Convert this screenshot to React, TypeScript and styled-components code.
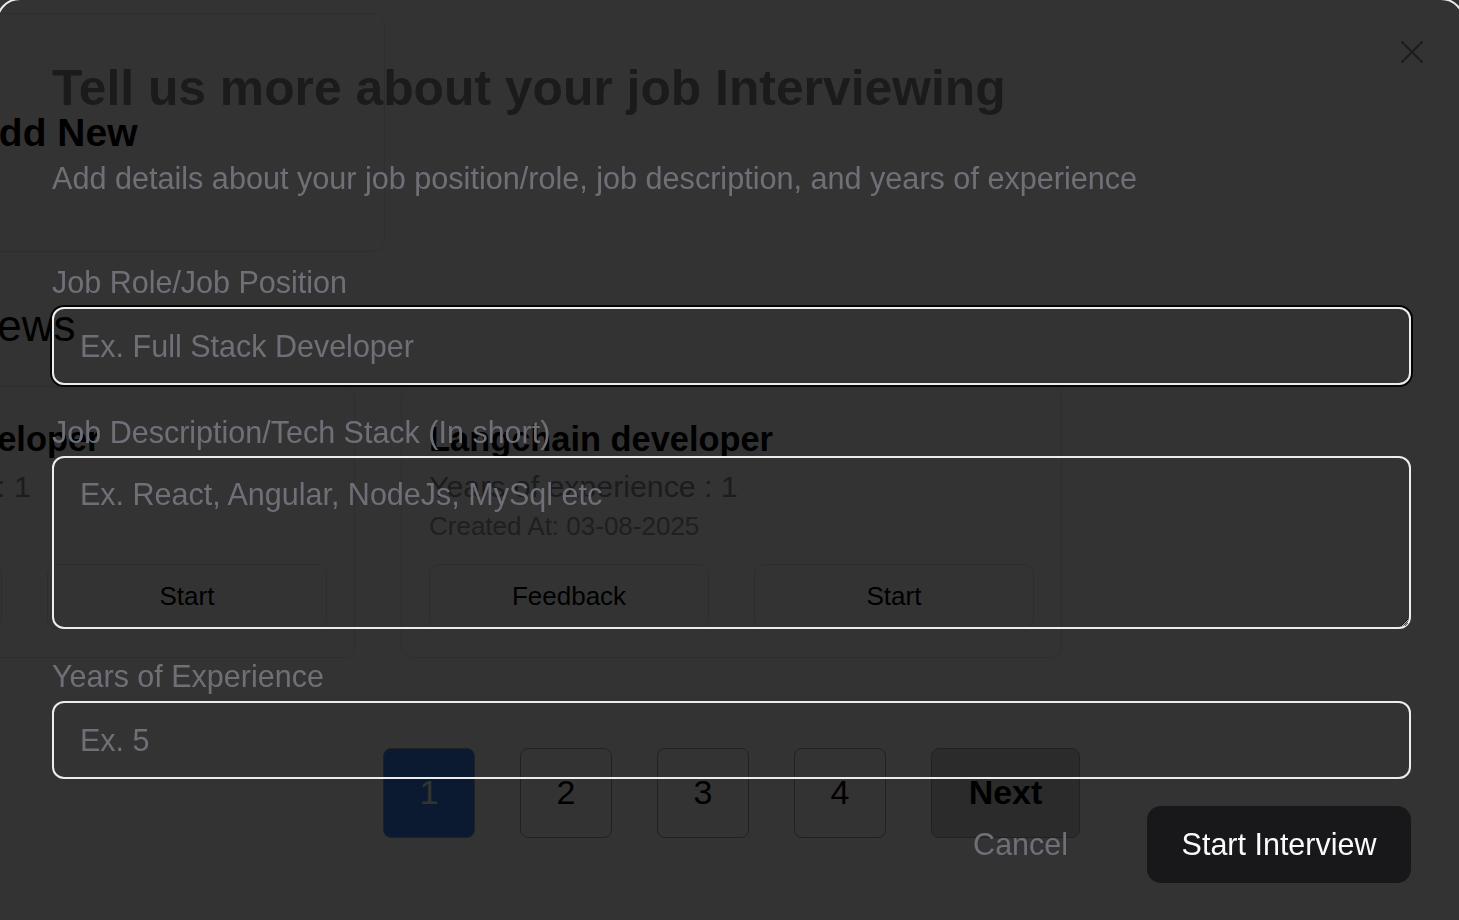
import React from 'react'
import styled, { createGlobalStyle } from 'styled-components'

const GlobalStyle = createGlobalStyle`
  html, body {
    margin: 0;
    height: 100%;
    overflow: hidden;
    background: #ffffff;
    font-family: 'Liberation Sans', Arial, sans-serif;
  }
  * {
    box-sizing: border-box;
  }
`

const interviews = [
  { role: 'MERN Stack Developer', years: 1, created: '02-08-2025' },
  { role: 'Langchain developer', years: 1, created: '03-08-2025' },
]

const Dashboard: React.FC = () => {
  return (
    <StyledDashboard>
      <AddNewRow>
        <AddNewCard>+ Add New</AddNewCard>
      </AddNewRow>

      <SectionTitle>Previous Interviews</SectionTitle>

      <CardGrid>
        {interviews.map((item) => (
          <InterviewCard key={item.role}>
            <CardTitle>{item.role}</CardTitle>
            <CardMeta>Years of experience : {item.years}</CardMeta>
            <CardDate>Created At: {item.created}</CardDate>
            <CardActions>
              <OutlineButton>Feedback</OutlineButton>
              <OutlineButton>Start</OutlineButton>
            </CardActions>
          </InterviewCard>
        ))}
      </CardGrid>

      <Pager>
        {[1, 2, 3, 4].map((n) => (
          <PageButton key={n} $active={n === 1}>
            {n}
          </PageButton>
        ))}
        <NextButton>Next</NextButton>
      </Pager>
    </StyledDashboard>
  )
}

const CloseIcon: React.FC = () => (
  <svg width="24" height="24" viewBox="0 0 24 24" fill="none">
    <path d="M2 2 L22 22 M22 2 L2 22" stroke="#1d1d1d" strokeWidth="2.2" strokeLinecap="round" />
  </svg>
)

const InterviewDialog: React.FC = () => {
  return (
    <>
      <Overlay />
      <DialogBox role="dialog">
        <CloseButton aria-label="Close">
          <CloseIcon />
        </CloseButton>
        <DialogTitle>Tell us more about your job Interviewing</DialogTitle>
        <DialogDescription>
          Add details about your job position/role, job description, and years of experience
        </DialogDescription>

        <Form onSubmit={(e) => e.preventDefault()}>
          <Field>
            <Label>Job Role/Job Position</Label>
            <TextInput $focused placeholder="Ex. Full Stack Developer" />
          </Field>
          <Field>
            <Label>Job Description/Tech Stack (In short)</Label>
            <TextArea placeholder="Ex. React, Angular, NodeJs, MySql etc" />
          </Field>
          <Field>
            <Label>Years of Experience</Label>
            <TextInput type="number" placeholder="Ex. 5" />
          </Field>

          <Footer>
            <GhostButton type="button">Cancel</GhostButton>
            <PrimaryButton type="submit">Start Interview</PrimaryButton>
          </Footer>
        </Form>
      </DialogBox>
    </>
  )
}

const App: React.FC = () => {
  return (
    <>
      <GlobalStyle />
      <Dashboard />
      <InterviewDialog />
    </>
  )
}

/* background page */

const StyledDashboard = styled.main`
  width: 2075px;
  margin-left: -306px;
  padding-top: 13px;
`

const AddNewRow = styled.div`
  display: flex;
  padding-left: 5px;
`

const AddNewCard = styled.div`
  width: 686px;
  height: 239px;
  padding-right: 8px;
  border: 1px solid #e6e6e6;
  border-radius: 12px;
  display: flex;
  align-items: center;
  justify-content: center;
  font-size: 39px;
  font-weight: 700;
  color: #000;
`

const SectionTitle = styled.h2`
  margin: 48px 0 0;
  font-size: 44px;
  font-weight: 400;
  line-height: 1.2;
  color: #000;
`

const CardGrid = styled.div`
  margin-top: 33px;
  display: grid;
  grid-template-columns: repeat(3, 661px);
  gap: 46px;
`

const InterviewCard = styled.div`
  height: 272px;
  border: 1px solid #e6e6e6;
  border-radius: 12px;
  padding: 32px 27px 0;
`

const CardTitle = styled.h3`
  margin: 0;
  font-size: 34.4px;
  font-weight: 700;
  line-height: 1.2;
  color: #000;
`

const CardMeta = styled.p`
  margin: 9px 0 0;
  font-size: 30.3px;
  line-height: 1.2;
  color: #8e8e8e;
`

const CardDate = styled.p`
  margin: 7px 0 0;
  font-size: 26px;
  line-height: 1.15;
  color: #9a9a9a;
`

const CardActions = styled.div`
  margin-top: 22px;
  display: grid;
  grid-template-columns: 1fr 1fr;
  gap: 45px;
`

const OutlineButton = styled.button`
  height: 65px;
  border: 1px solid #e2e2e2;
  border-radius: 10px;
  background: #ffffff;
  font-family: inherit;
  font-size: 26px;
  color: #000;
`

const Pager = styled.nav`
  margin-top: 90px;
  display: flex;
  justify-content: center;
  gap: 45px;
`

const PageButton = styled.button<{ $active?: boolean }>`
  width: 92px;
  height: 90px;
  border: 1px solid #9ca3af;
  border-radius: 8px;
  background: ${(p) => (p.$active ? '#3b82f6' : '#ffffff')};
  color: ${(p) => (p.$active ? '#ffffff' : '#000000')};
  font-family: inherit;
  font-size: 34px;
`

const NextButton = styled.button`
  width: 149px;
  height: 90px;
  border: 1px solid #9ca3af;
  border-radius: 8px;
  background: #d4d7dd;
  color: #000;
  font-family: inherit;
  font-size: 34px;
  font-weight: 700;
`

/* dialog */

const Overlay = styled.div`
  position: fixed;
  inset: 0;
  background: rgba(0, 0, 0, 0.8);
`

const DialogBox = styled.div`
  position: fixed;
  top: -2px;
  left: -4px;
  width: calc(100% + 10px);
  height: calc(100% + 60px);
  border: 2px solid #ececec;
  border-radius: 24px;
  padding: 58px 52px 0 54px;
`

const CloseButton = styled.button`
  position: absolute;
  top: 40px;
  right: 39px;
  width: 24px;
  height: 24px;
  padding: 0;
  border: none;
  background: none;
  display: flex;
`

const DialogTitle = styled.h2`
  margin: 0;
  font-size: 49.8px;
  font-weight: 700;
  line-height: 60px;
  color: #1b1b1b;
`

const DialogDescription = styled.p`
  margin: 43px 0 0;
  font-size: 30.6px;
  line-height: 35px;
  color: #6f6f78;
`

const Form = styled.form`
  margin-top: 69px;
  display: flex;
  flex-direction: column;
  gap: 30px;
`

const Field = styled.div`
  display: flex;
  flex-direction: column;
  gap: 7px;
`

const Label = styled.label`
  font-size: 30.5px;
  line-height: 35px;
  color: #6f6f78;
`

const TextInput = styled.input<{ $focused?: boolean }>`
  height: 78px;
  width: 100%;
  padding: 0 26px;
  border: 2px solid #ededed;
  border-radius: 12px;
  background: transparent;
  font-family: inherit;
  font-size: 30.5px;
  color: #e5e5e5;
  outline: none;
  box-shadow: ${(p) => (p.$focused ? '0 0 0 2px #050505' : 'none')};
  appearance: textfield;

  &::placeholder {
    color: #6f6f78;
  }
  &::-webkit-outer-spin-button,
  &::-webkit-inner-spin-button {
    -webkit-appearance: none;
    margin: 0;
  }
`

const TextArea = styled.textarea`
  height: 173px;
  width: 100%;
  margin-top: -1px;
  padding: 19px 26px;
  border: 2px solid #ededed;
  border-radius: 12px;
  background: transparent;
  font-family: inherit;
  font-size: 30.5px;
  color: #e5e5e5;
  outline: none;
  resize: vertical;

  &::placeholder {
    color: #6f6f78;
  }
`

const Footer = styled.div`
  margin-top: -3px;
  display: flex;
  justify-content: flex-end;
  align-items: center;
  gap: 45px;
`

const GhostButton = styled.button`
  height: 77px;
  padding: 0 34px;
  border: none;
  background: transparent;
  font-family: inherit;
  font-size: 30.5px;
  color: #6f6f78;
`

const PrimaryButton = styled.button`
  height: 77px;
  padding: 0 34.5px;
  border: none;
  border-radius: 14px;
  background: #18181b;
  font-family: inherit;
  font-size: 30.5px;
  color: #fafafa;
`

export default App
